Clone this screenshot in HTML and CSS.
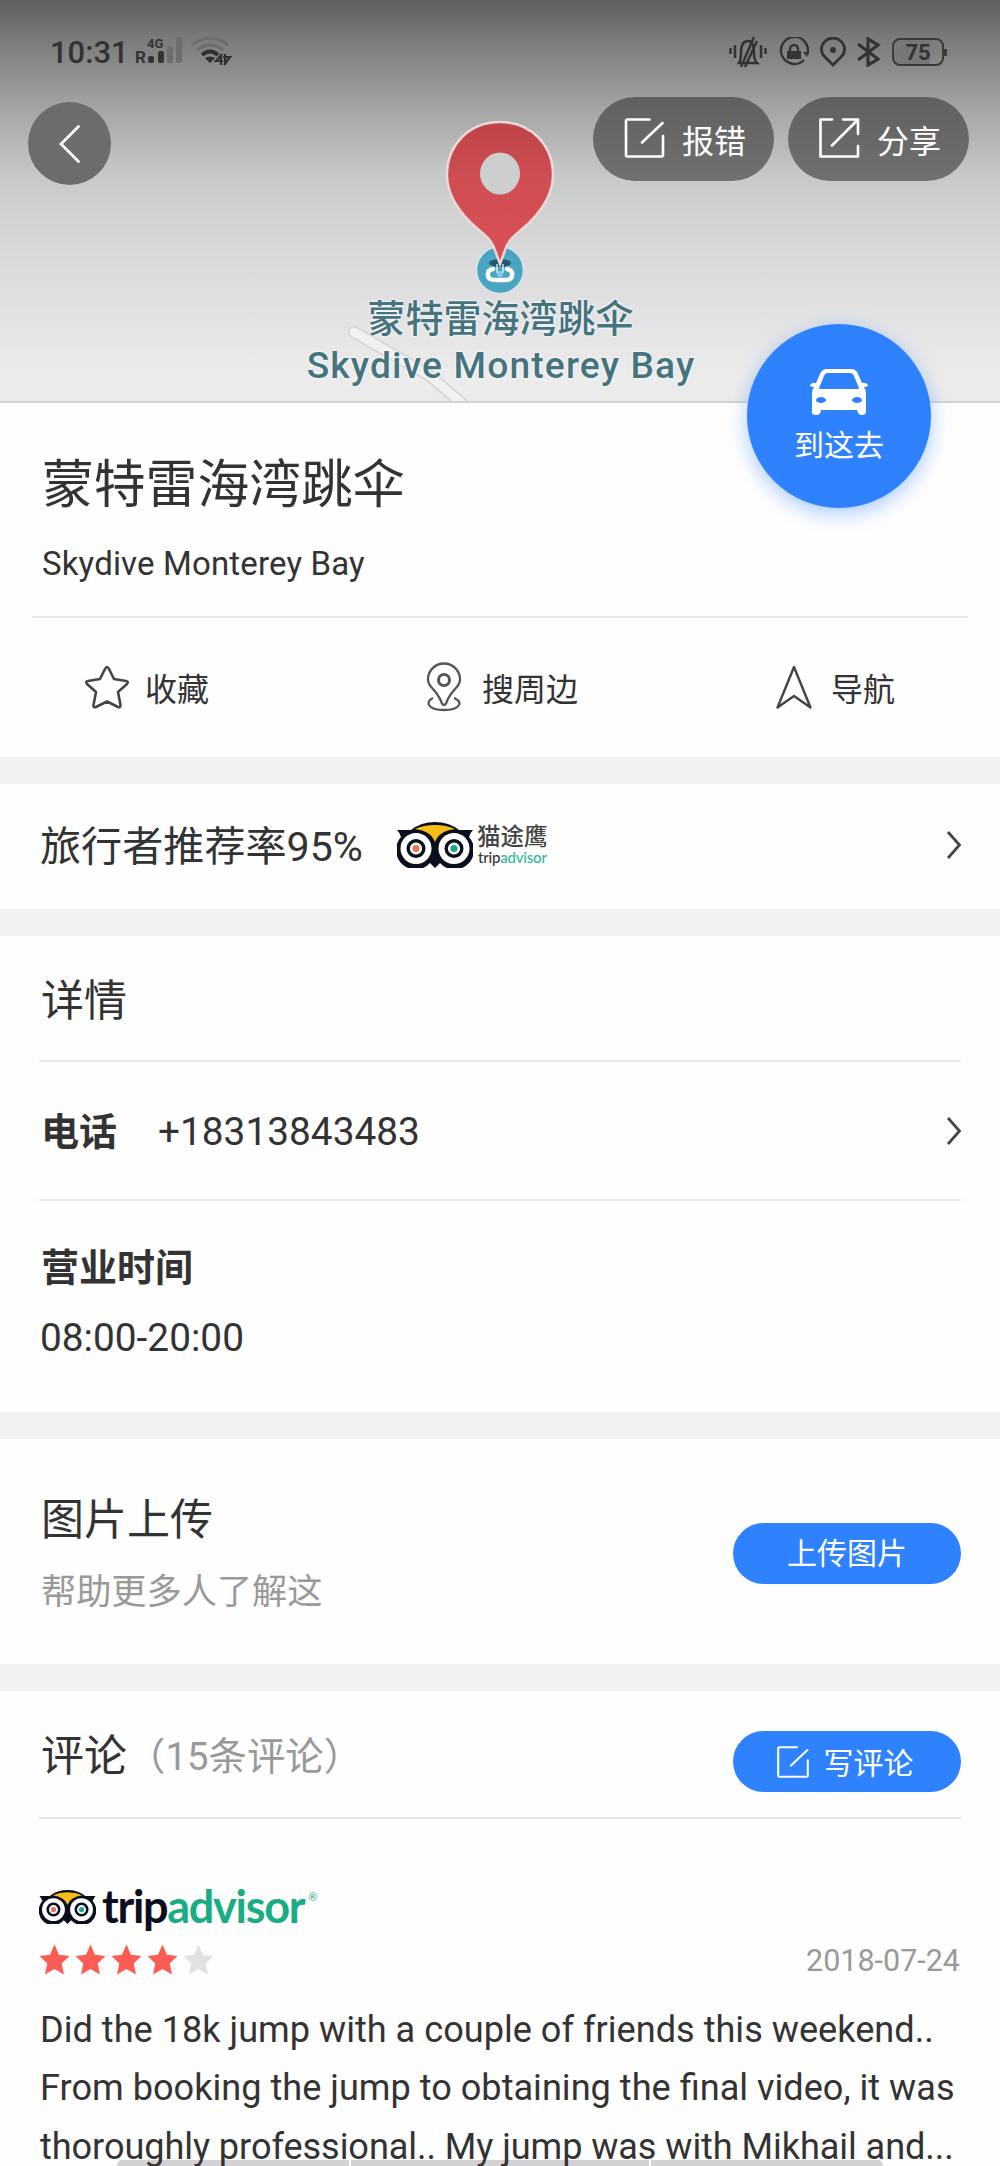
FILE: index.html
```html
<!DOCTYPE html>
<html lang="zh-CN">
<head>
<meta charset="utf-8">
<title>蒙特雷海湾跳伞</title>
<link rel="stylesheet" href="styles.css">
</head>
<body>
<svg class="defs" width="0" height="0" aria-hidden="true">
  <symbol id="edit" viewBox="0 0 40 40">
    <path d="M25 1.500H3a1.500 1.500 0 0 0-1.500 1.500V37a1.500 1.500 0 0 0 1.500 1.500H37a1.500 1.500 0 0 0 1.500-1.500V18M17.500 24.500 38 5" fill="none" stroke="#fff" stroke-width="2.600" stroke-linecap="round"/>
  </symbol>
  <symbol id="chevron" viewBox="0 0 16 30">
    <path d="M2 2 13.500 15 2 28" fill="none" stroke="#444" stroke-width="2.800"/>
  </symbol>
  <symbol id="star" viewBox="0 0 31 31">
    <path d="M15.500 .5 20 10.800 30.500 12 22.700 19.500 25 30.500 15.500 25 6 30.500 8.300 19.500 .5 12 11 10.800Z"/>
  </symbol>
  <symbol id="owl" viewBox="0 0 76 46">
    <path d="M0 8H14Q24 0 38 0T62 8H76Q73 11 72 15A19 19 0 0 1 43 41L38 46 33 41A19 19 0 0 1 4 15Q3 11 0 8Z" fill="#0b0f1d"/>
    <path d="M18 7Q27 3 38 3T58 7Q42 9 38 20 34 9 18 7Z" fill="#f6bd17"/>
    <circle cx="19" cy="26.500" r="15.500" fill="#fff"/><circle cx="57" cy="26.500" r="15.500" fill="#fff"/>
    <circle cx="19" cy="26.500" r="7.800" fill="#fff" stroke="#0b0f1d" stroke-width="3.400"/>
    <circle cx="57" cy="26.500" r="7.800" fill="#fff" stroke="#0b0f1d" stroke-width="3.400"/>
    <circle cx="19" cy="26.500" r="3.600" fill="#e5775b"/><circle cx="57" cy="26.500" r="3.600" fill="#1ba98a"/>
  </symbol>
</svg>

<header class="map">
  <svg class="road" width="150" height="78" viewBox="0 0 150 78">
    <path d="M10 9 86 53 122 84" fill="none" stroke="#d2d2d2" stroke-width="12" stroke-linecap="round"/>
    <path d="M10 9 86 53 122 84" fill="none" stroke="#f1f1f1" stroke-width="9" stroke-linecap="round"/>
  </svg>
  <div class="place">
    <svg class="pin" width="116" height="180" viewBox="0 0 116 180">
      <circle cx="58" cy="152" r="23.500" fill="#4aa5c2" stroke="#d8e4e8" stroke-width="1.500"/>
      <ellipse cx="58" cy="145" rx="11" ry="4" fill="#24546c"/>
      <path d="M51 151q-6 1-5 7 1 4 7 4h10q6 0 7-4 1-6-5-7" fill="none" stroke="#fff" stroke-width="4.500" stroke-linecap="round"/>
      <path d="M55 146v9M61 146v9" stroke="#fff" stroke-width="1.200"/>
      <circle cx="58" cy="156" r="3" fill="#7fd0ea"/>
      <path d="M58 4C27 4 5 27 5 57 5 77 17 93 29 105 42 117 50 120 54 135L58 146 62 135C66 120 74 117 87 105 99 93 111 77 111 57 111 27 89 4 58 4Z" fill="url(#red)" stroke="#ead9d9" stroke-width="2.500"/>
      <ellipse cx="58" cy="55.500" rx="20" ry="21" fill="#cdcfce"/>
      <defs><linearGradient id="red" x2="0" y2="1"><stop stop-color="#be4448"/><stop offset=".4" stop-color="#cf4e53"/><stop offset="1" stop-color="#dc5057"/></linearGradient></defs>
    </svg>
    <div class="place-cn">蒙特雷海湾跳伞</div>
    <div class="place-en">Skydive Monterey Bay</div>
  </div>
  <div class="statusbar">
    <div class="status-left">
      <span class="clock">10:31</span>
      <svg width="98" height="34" viewBox="0 0 98 34">
        <text x="0" y="28" class="net">R</text><text x="12" y="13" class="net-small">4G</text>
        <g fill="#353535"><rect x="13" y="21" width="6" height="7" rx="2"/><rect x="23" y="16" width="6" height="12" rx="2"/></g>
        <g fill="#6d6d6d"><rect x="32" y="11" width="6" height="17" rx="2"/><rect x="41" y="2" width="6" height="26" rx="2"/></g>
        <g fill="none" stroke="#6d6d6d" stroke-width="3"><path d="M57 10Q75-4 93 10"/><path d="M62 15Q75 5 88 15"/></g>
        <path d="M67 20Q75 13 83 20" fill="none" stroke="#303030" stroke-width="4"/><path d="M70 23q5-3 10 0l-5 5Z" fill="#303030"/>
        <path d="M86 19v11M87 19 81 26h7M90 30V19M89 30l6-8h-7" fill="none" stroke="#303030" stroke-width="2.200"/>
      </svg>
    </div>
    <div class="status-right">
      <svg class="ic-bell" width="38" height="32" viewBox="0 0 38 32" fill="none" stroke="#333" stroke-width="2.500">
        <path d="M1.500 12v6M6 9v13M32 9v13M36.500 12v6M10 27h18q-3-3-3-10 0-12-6-12-7 0-7 12 0 7-2 10ZM25 1 12 31M28 5 16 31"/>
      </svg>
      <svg width="30" height="30" viewBox="0 0 30 30" fill="none" stroke="#333" stroke-width="2.400">
        <path d="M25 23A13.500 13.500 0 1 1 28.500 17"/><path d="M24 15h6l-2 5Z" fill="#333" stroke="none"/>
        <rect x="8" y="14" width="14" height="8" fill="#333" stroke="none"/><path d="M11 15v-3a4 4 0 0 1 8 0v3"/>
      </svg>
      <svg class="ic-loc" width="26" height="30" viewBox="0 0 26 30" fill="none" stroke="#333" stroke-width="2.800">
        <path d="M13 28 5 20Q1.500 17 1.500 12.500A11.500 11.500 0 0 1 24.500 12.500Q24.500 17 21 20Z"/><circle cx="13" cy="13" r="3" fill="#333" stroke="none"/>
      </svg>
      <svg class="ic-bt" width="24" height="30" viewBox="0 0 24 30" fill="none" stroke="#333" stroke-width="3.200">
        <path d="M1 7 21 22 11 28V2l10 6L1 23"/>
      </svg>
      <span class="battery">75</span>
    </div>
  </div>
  <nav class="toolbar">
    <a class="back"><svg width="22" height="38" viewBox="0 0 22 38"><path d="M19.500 1.500 2 19 19.500 36.500" fill="none" stroke="#fff" stroke-width="2.700" stroke-linecap="round"/></svg></a>
    <a class="pill"><svg width="41" height="40"><use href="#edit"/></svg><span>报错</span></a>
    <a class="pill"><svg width="41" height="40" viewBox="0 0 41 40"><path d="M13 1.500H1.500V38.500H39V28M24 1.500H39V16M39 1.500 13 27.500" fill="none" stroke="#fff" stroke-width="2.600" stroke-linecap="round" stroke-linejoin="round"/></svg><span>分享</span></a>
  </nav>
  <a class="go">
    <svg width="58" height="48" viewBox="0 0 58 48">
      <path d="M17 1H41Q46 1 48 6L52 15q4-1 6 2 0 2-4 2 2 3 2 6V43q0 4-4 4t-5-5H11q0 5-5 5t-4-4V25q0-3 2-6-4 0-4-2 2-3 6-2L10 6Q12 1 17 1Z" fill="#fff"/>
      <path d="M18 5H40Q43 5 44 8L49 20Q49 21 47 21H11Q9 21 9 20L14 8Q15 5 18 5Z" fill="#2f82fd"/>
      <ellipse cx="11" cy="32" rx="5" ry="3" fill="#2f82fd"/><ellipse cx="47" cy="32" rx="5" ry="3" fill="#2f82fd"/>
    </svg>
    <span>到这去</span>
  </a>
</header>

<main class="sheet">
  <section class="summary">
    <div class="titles">
      <h1>蒙特雷海湾跳伞</h1>
      <p>Skydive Monterey Bay</p>
    </div>
    <div class="actions">
      <a><svg width="46" height="46" viewBox="0 0 46 46"><path d="M23 3Q24 3 25 5L30 15 42 17Q45 17.500 43 20L34 28 36.500 41Q36.500 44 34 43L23 37.500 12 43Q9 44 9.500 41L12 28 3 20Q1 17.500 4 17L16 15 21 5Q22 3 23 3Z" fill="none" stroke="#444" stroke-width="2.600" stroke-linejoin="round"/></svg><span>收藏</span></a>
      <a><svg width="36" height="50" viewBox="0 0 36 50" fill="none" stroke="#555" stroke-width="2.300"><path d="M18 43Q16 43 15 39 13 34 7 27 2 22 2 17.500A16 16 0 0 1 34 17.500Q34 22 29 27 23 34 21 39 20 43 18 43Z"/><circle cx="18" cy="18" r="5.500" stroke-width="3"/><path d="M7 36Q1 39 3 43 6 48 18 48T33 43Q35 39 28 36"/></svg><span>搜周边</span></a>
      <a><svg width="38" height="46" viewBox="0 0 38 46"><path d="M19 3 2.500 43.500 19 32 35.500 43.500Z" fill="none" stroke="#444" stroke-width="2.400" stroke-linejoin="round"/></svg><span>导航</span></a>
    </div>
  </section>

  <section class="recommend">
    <span class="rate">旅行者推荐率95%</span>
    <div class="ta-small">
      <svg width="76" height="46"><use href="#owl"/></svg>
      <div class="ta-names"><span class="ta-cn">猫途鹰</span><span class="ta-en">trip<em>advisor</em></span></div>
    </div>
    <svg class="more" width="16" height="30"><use href="#chevron"/></svg>
  </section>

  <section class="details">
    <h2>详情</h2>
    <div class="phone"><b>电话</b><span>+18313843483</span><svg class="more" width="16" height="30"><use href="#chevron"/></svg></div>
    <div class="hours"><b>营业时间</b><span>08:00-20:00</span></div>
  </section>

  <section class="upload">
    <div class="upload-text"><h2>图片上传</h2><p>帮助更多人了解这</p></div>
    <a class="button">上传图片</a>
  </section>

  <section class="reviews">
    <div class="reviews-head">
      <h2>评论</h2><span class="count">（15条评论）</span>
      <a class="button"><svg width="32" height="32"><use href="#edit"/></svg><span>写评论</span></a>
    </div>
    <article>
      <div class="ta-logo">
        <svg width="57" height="34"><use href="#owl"/></svg>
        <span class="ta-word">trip<em>advisor</em></span><span class="reg">®</span>
      </div>
      <div class="meta">
        <div class="stars">
          <svg><use href="#star"/></svg><svg><use href="#star"/></svg><svg><use href="#star"/></svg><svg><use href="#star"/></svg><svg class="off"><use href="#star"/></svg>
        </div>
        <time>2018-07-24</time>
      </div>
      <p class="body"><span>Did the 18k jump with a couple of friends this weekend..</span><span>From booking the jump to obtaining the final video, it was</span><span class="last">thoroughly professional.. My jump was with Mikhail and...</span></p>
    </article>
  </section>
</main>
<div class="gesture"><i></i><i class="mid"></i><i></i></div>
</body>
</html>
```
FILE: styles.css
```css
* { box-sizing: border-box; }
html, body { margin: 0; height: 2166px; overflow: hidden; }
body {
  position: relative;
  width: 1000px;
  background: #fefefe;
  color: #333;
  font-family: Roboto, "Noto Sans CJK SC", sans-serif;
}
h1, h2, p { margin: 0; font-weight: 400; }
em { font-style: normal; }
svg { display: block; flex: none; }
.defs { position: absolute; }

.map {
  position: relative;
  height: 403px;
  border-bottom: 2px solid #d3d3d3;
  background: linear-gradient(#606060 0, #656565 10px, #7c7c7c 40px, #8f8f8f 75px, #a3a3a3 105px, #b5b5b5 140px, #c7c8c8 175px, #d0d1d1 210px, #dadada 260px, #e3e3e5 320px, #ececec 380px, #eaeaea 400px);
}
.road { position: absolute; left: 344px; top: 323px; }
.place {
  position: absolute;
  inset: 118px 0 auto 0;
  display: flex;
  flex-direction: column;
  align-items: center;
  color: #45747f;
  font-weight: 500;
  text-shadow: 0 0 2px #fff, 0 0 3px #fff;
}
.place-cn { height: 46px; line-height: 46px; margin-top: -2px; padding-left: 1px; font-size: 38px; }
.place-en { height: 46px; line-height: 46px; font-size: 37.200px; letter-spacing: 1.150px; padding-left: 2px; }

.statusbar {
  position: relative;
  display: flex;
  justify-content: space-between;
  height: 97px;
  padding: 35px 56px 0 50px;
  color: #333;
}
.status-left, .status-right { display: flex; align-items: center; height: 34px; }
.clock { width: 85px; font-size: 31px; font-weight: 500; line-height: 34px; padding-top: 1px; }
.net { font: 700 17px Roboto, sans-serif; fill: #333; }
.net-small { font: 700 13px Roboto, sans-serif; fill: #333; }
.ic-bell { margin-right: 12px; }
.ic-loc { margin-left: 11px; }
.ic-bt { margin: 0 11px; }
.battery {
  position: relative;
  width: 52px;
  height: 28px;
  border: 2px solid #3b3b3b;
  border-radius: 8px;
  background: linear-gradient(90deg, #777 74%, transparent 74%);
  font-size: 22px;
  font-weight: 700;
  line-height: 25px;
  text-align: center;
}
.battery::after { content: ""; position: absolute; right: -5px; top: 9px; width: 3px; height: 7px; background: #3b3b3b; }

.toolbar { position: relative; display: flex; gap: 14px; padding: 0 31px 0 28px; }
.back {
  display: flex;
  align-items: center;
  width: 83px;
  height: 83px;
  margin: 5px auto 0 0;
  padding-left: 31px;
  border-radius: 50%;
  background: #6c6c6c;
}
.pill {
  display: flex;
  align-items: center;
  gap: 17px;
  width: 181px;
  height: 84px;
  padding-left: 31px;
  border-radius: 42px;
  background: linear-gradient(#606060, #707070);
  color: #fff;
  font-size: 32px;
}
.pill svg { margin-top: -2px; }

.go {
  position: absolute;
  left: 747px;
  top: 324px;
  z-index: 2;
  display: flex;
  flex-direction: column;
  align-items: center;
  width: 184px;
  height: 184px;
  padding-top: 44px;
  border-radius: 50%;
  background: #2f82fd;
  box-shadow: 0 6px 20px rgba(47, 130, 253, .4);
  color: #fff;
  font-size: 30px;
  line-height: 40px;
}
.go span { margin-top: 10px; }

section { border-bottom: 27px solid #f0f2f4; }
.summary { height: 381px; }
.titles { height: 215px; margin: 0 32px; padding: 49px 10px 0; border-bottom: 2px solid #e8e8e8; }
h1 { height: 68px; font-size: 51.800px; line-height: 68px; white-space: nowrap; }
.titles p { margin-top: 24px; font-size: 33px; line-height: 40px; letter-spacing: .15px; }
.actions { display: flex; align-items: center; height: 137px; padding-left: 84px; font-size: 32px; }
.actions a { display: flex; align-items: center; }
.actions a + a { margin-left: 217px; }
.actions a:last-child { margin-left: 197px; }
.actions span { margin: 0 0 0 15px; }
.actions a:nth-child(2) span { margin-left: 20px; }
.actions a:nth-child(3) span { margin-left: 18px; }

.recommend { display: flex; align-items: center; height: 152px; padding: 0 38px 4px 40px; }
.rate { width: 357px; padding-bottom: 4px; font-size: 41.100px; white-space: nowrap; }
.more { margin-left: auto; }
.ta-small { display: flex; align-items: center; gap: 4px; }
.ta-names { display: flex; flex-direction: column; gap: 1px; white-space: nowrap; }
.ta-cn { font: 500 23.500px/24px "Noto Sans CJK SC", sans-serif; color: #444; }
.ta-en { font: 500 15px/18px Lato, sans-serif; letter-spacing: -.2px; padding-left: 1px; }
.ta-en em { color: #34b997; }

.details { height: 503px; padding: 0 39px; }
h2 { font-size: 43px; white-space: nowrap; }
.details h2 { height: 126px; padding-top: 34px; line-height: 62px; border-bottom: 2px solid #e8e8e8; text-indent: 2px; }
.phone { display: flex; align-items: center; height: 139px; padding-left: 2px; border-bottom: 2px solid #e8e8e8; font-size: 38.800px; }
.phone .more { margin-right: -1px; }
.phone span { padding-top: 1px; }
.phone b { width: 117px; padding-bottom: 4px; font-size: 38px; }
.hours { display: flex; flex-direction: column; padding: 42px 0 0 2px; font-size: 38px; line-height: 50px; }
.hours span { margin-top: 20px; margin-left: -1px; font-size: 38.800px; }

.upload { display: flex; justify-content: space-between; height: 252px; padding: 49px 39px 0 41px; }
.upload h2 { line-height: 64px; }
.upload p { margin-top: 15px; color: #999; font-size: 35.200px; line-height: 50px; }
.button {
  display: flex;
  align-items: center;
  justify-content: center;
  gap: 15px;
  width: 228px;
  height: 61px;
  margin-top: 35px;
  padding-bottom: 5px;
  border-radius: 31px;
  background: #2f82fd;
  color: #fff;
  font-size: 30px;
}

.reviews { border: 0; padding: 0 39px; }
.reviews-head { display: flex; height: 128px; border-bottom: 2px solid #e4e4e4; }
.reviews-head h2 { width: 88px; padding: 33px 0 0 2px; line-height: 64px; }
.count { padding-top: 34px; color: #999; font-size: 38.400px; line-height: 64px; white-space: nowrap; }
.reviews-head .button { margin: 40px 0 0 auto; padding: 1px 4px 0 0; }
.reviews-head .button span { margin-top: -2px; }
article { padding-top: 60px; }
.ta-logo { display: flex; align-items: center; height: 60px; padding-bottom: 5px; }
.ta-word { margin-left: 6px; font: 700 45px/55px Lato, sans-serif; letter-spacing: -1.300px; color: #0b0f1d; }
.ta-word em { color: #19ad83; }
.reg { margin: -20px 0 0 4px; font: 400 11px/14px Lato, sans-serif; color: #19ad83; }
.meta { display: flex; justify-content: space-between; align-items: center; height: 40px; }
.stars { display: flex; gap: 5px; fill: #fb5d54; }
.stars svg { width: 31px; height: 31px; }
.stars .off { fill: #e1e1e1; }
time { color: #999; font-size: 30.500px; line-height: 36px; margin: 4px 1px 0 0; }
.body { position: relative; z-index: 1; margin-top: 22px; padding-left: 1px; font-size: 36.130px; line-height: 58.300px; white-space: nowrap; }
.body span { display: block; }
.body .last { letter-spacing: -.08px; }

.gesture { position: absolute; left: 117px; bottom: 0; display: flex; gap: 2px; height: 6px; width: 766px; }
.gesture i { flex: 232 1 0; background: #d4d1d4; }
.gesture .mid { flex-grow: 298; }
.gesture i:first-child { border-top-left-radius: 5px; }
.gesture i:last-child { border-top-right-radius: 5px; }
```
